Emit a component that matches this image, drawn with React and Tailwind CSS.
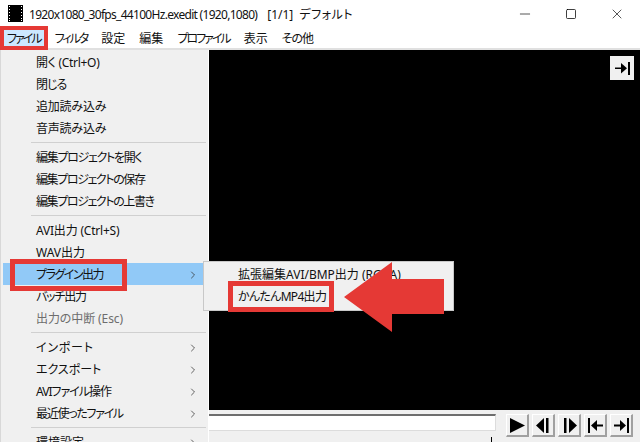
import React from 'react';
import { Minus, Square, X, ChevronRight } from 'lucide-react';

const font = { fontFamily: '"Noto Sans", "Noto Sans CJK JP", sans-serif', fontFeatureSettings: '"palt"' };

const menuBar = [
    { label: 'ファイル', cls: 'tracking-[-2px] bg-[#cce8ff]' },
    { label: 'フィルタ', cls: 'tracking-[-2px]' },
    { label: '設定', cls: '' },
    { label: '編集', cls: '' },
    { label: 'プロファイル', cls: 'tracking-[-2px]' },
    { label: '表示', cls: '' },
    { label: 'その他', cls: 'tracking-[-1px]' },
];

const fileMenu = [
    { label: '開く (Ctrl+O)', cls: 'tracking-[-0.3px]' },
    { label: '閉じる', cls: 'tracking-[-1px]' },
    { label: '追加読み込み', cls: 'tracking-[-0.2px]' },
    { label: '音声読み込み', cls: 'tracking-[-0.2px]' },
    { sep: true },
    { label: '編集プロジェクトを開く', cls: 'tracking-[-1.3px]' },
    { label: '編集プロジェクトの保存', cls: 'tracking-[-1.4px]' },
    { label: '編集プロジェクトの上書き', cls: 'tracking-[-1.4px]' },
    { sep: true },
    { label: 'AVI出力 (Ctrl+S)', cls: 'tracking-[-0.2px]' },
    { label: 'WAV出力', cls: '' },
    { label: 'プラグイン出力', arrow: true, active: true, cls: 'tracking-[-1.5px]' },
    { label: 'バッチ出力', cls: 'tracking-[-1.2px]' },
    { label: '出力の中断 (Esc)', disabled: true, cls: 'tracking-[-0.1px]' },
    { sep: true },
    { label: 'インポート', arrow: true, cls: 'tracking-[0.8px]' },
    { label: 'エクスポート', arrow: true, cls: '' },
    { label: 'AVIファイル操作', arrow: true, cls: 'tracking-[-1px]' },
    { label: '最近使ったファイル', arrow: true, cls: 'tracking-[-1.3px]' },
    { sep: true },
    { label: '環境設定', arrow: true, cls: '' },
];

function FilmIcon() {
    return (
        <svg width="15" height="17" viewBox="0 0 15 17" className="shrink-0">
            <rect x="0" y="0" width="15" height="17" fill="#000" />
            {[1, 4, 7, 10, 13, 15].map((y) => (
                <g key={y}>
                    <rect x="1" y={y} width="1" height="1" fill="#fff" />
                    <rect x="13" y={y} width="1" height="1" fill="#fff" />
                </g>
            ))}
        </svg>
    );
}

function TransportButton({ children }) {
    return (
        <div className="w-[23px] h-[23px] flex items-center justify-center bg-[#f0f0f0] border-t border-l border-t-white border-l-white border-r-2 border-b-2 border-r-[#a0a0a0] border-b-[#a0a0a0]">
            <svg width="17" height="17" viewBox="0 0 17 17" fill="#000">{children}</svg>
        </div>
    );
}

function MenuItem({ item }) {
    if (item.sep) {
        return (
            <div className="h-[7px] pt-[3px] pl-[30px] pr-[2px]">
                <div className="h-px bg-[#d0d0d0]" />
            </div>
        );
    }
    return (
        <div className={`h-[22px] shrink-0 mx-[2px] pl-[33px] pr-[7px] pt-[2px] flex items-center justify-between ${item.active ? 'bg-[#91c9f7]' : ''}`}>
            <span className={`text-xs whitespace-nowrap ${item.cls} ${item.disabled ? 'text-[#6d6d6d]' : 'text-[#111]'}`}>{item.label}</span>
            {item.arrow && <ChevronRight className="w-3 h-3 text-[#333]" strokeWidth={1.5} />}
        </div>
    );
}

export default function App() {
    return (
        <div className="relative w-[640px] h-[442px] overflow-hidden flex flex-col bg-white" style={font}>
            {/* Title bar */}
            <div className="h-[27px] shrink-0 flex items-center pl-2 bg-white">
                <FilmIcon />
                <div className="ml-[6px] pt-[2px] flex text-xs text-[#111] whitespace-nowrap">
                    <span className="tracking-[-0.7px]">1920x1080_30fps_44100Hz.exedit (1920,1080)</span>
                    <span className="ml-[10px]">[1/1]</span>
                    <span className="ml-[6px] tracking-[0.5px]">デフォルト</span>
                </div>
                <div className="ml-auto flex items-center h-full">
                    <div className="w-[46px] h-full flex items-center justify-center"><Minus className="w-4 h-4" strokeWidth={1} /></div>
                    <div className="w-[46px] h-full flex items-center justify-center"><Square className="w-3 h-3" strokeWidth={1.5} /></div>
                    <div className="w-[46px] h-full flex items-center justify-center"><X className="w-4 h-4" strokeWidth={1} /></div>
                </div>
            </div>

            {/* Menu bar */}
            <div className="h-[23px] shrink-0 flex items-center bg-white border-b-2 border-b-[#e0e0e0]">
                {menuBar.map((m) => (
                    <div key={m.label} className={`h-full flex items-center px-[7px] pt-[2px] text-xs text-[#111] ${m.cls}`}>{m.label}</div>
                ))}
            </div>

            {/* Preview */}
            <div className="h-[360px] shrink-0 bg-black flex justify-end pt-[6px] pr-[6px]">
                <div className="w-[24px] h-[24px] bg-[#f0f0f0] flex items-center justify-center">
                    <svg width="17" height="17" viewBox="0 0 17 17" fill="#000">
                        <rect x="1" y="7.5" width="10" height="1.5" />
                        <path d="M7 3 L13 8.2 L7 13.5 Z" />
                        <rect x="14" y="2" width="2" height="13" />
                    </svg>
                </div>
            </div>

            {/* Bottom controls */}
            <div className="flex-1 bg-[#f0f0f0] flex pt-1 pl-[209px]">
                <div className="w-[287px] flex flex-col">
                    <div className="h-[17px] bg-white border-t-2 border-t-[#6e6e6e] border-r border-b border-r-[#dcdcdc] border-b-[#dcdcdc]" />
                    <div className="flex justify-end pr-[4px] pt-[6px]">
                        <div className="w-px h-[5px] bg-black" />
                    </div>
                </div>
                <div className="ml-[10px] flex gap-[3px]">
                    <TransportButton><path d="M1 1 L16 8.5 L1 16 Z" /></TransportButton>
                    <TransportButton><path d="M1 8.5 L9 1 L9 16 Z" /><rect x="11" y="1" width="2.5" height="15" /></TransportButton>
                    <TransportButton><rect x="3" y="1" width="2.5" height="15" /><path d="M8 1 L16 8.5 L8 16 Z" /></TransportButton>
                    <TransportButton><rect x="1" y="1" width="2" height="15" /><path d="M4 8.5 L10 3 L10 14 Z" /><rect x="9" y="7.5" width="7" height="2" /></TransportButton>
                    <TransportButton><rect x="1" y="7.5" width="8" height="2" /><path d="M7 3 L13 8.5 L7 14 Z" /><rect x="14" y="1" width="2" height="15" /></TransportButton>
                </div>
            </div>

            {/* File dropdown */}
            <div className="absolute left-0 top-[50px] w-[209px] h-[392px] overflow-hidden bg-[#f0f0f0] border-l border-r border-l-[#d8d8d8] border-r-white pt-px">
                {fileMenu.map((item, i) => <MenuItem key={i} item={item} />)}
            </div>

            {/* Plugin output submenu */}
            <div className="absolute left-[203px] top-[261px] w-[251px] h-[50px] bg-[#f0f0f0] border border-[#c8c8c8] py-px">
                <div className="h-[22px] pl-[34px] pt-[2px] flex items-center text-xs text-[#111]">拡張編集AVI/BMP出力 (RGBA)</div>
                <div className="h-[22px] pl-[34px] pt-[2px] flex items-center text-xs text-[#111] tracking-[-0.7px]">かんたんMP4出力</div>
            </div>

            {/* Annotations */}
            <div className="absolute left-0 top-[26px] w-[48px] h-[24px] border-[4px] border-[#e53935]" />
            <div className="absolute left-[10px] top-[259px] w-[117px] h-[32px] border-[5px] border-[#e53935]" />
            <div className="absolute left-[228px] top-[281px] w-[106px] h-[31px] border-[5px] border-[#e53935]" />
            <svg className="absolute left-[344px] top-[262px]" width="100" height="70" viewBox="0 0 100 70">
                <path d="M0 35 L48 0 L48 17 L100 17 L100 52 L48 52 L48 70 Z" fill="#e53935" />
            </svg>
        </div>
    );
}
